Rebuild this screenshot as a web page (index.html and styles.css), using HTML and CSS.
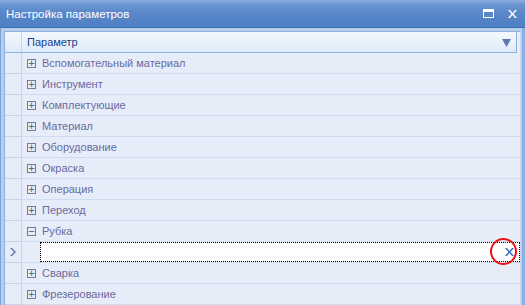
FILE: index.html
```html
<!DOCTYPE html>
<html>
  <head>
    <meta charset="UTF-8" />
    <title>Настройка параметров</title>
    <link rel="stylesheet" href="styles.css">
  </head>
  <body>
    <div class="window">
      <div class="titlebar">
        <div class="title">Настройка параметров</div>
        <div class="buttons">
          <span class="btn-max"></span>
          <svg class="btn-close" width="9" height="8" viewBox="0 0 9 8">
            <path d="M0 0h2l2.5 3 2.5-3h2l-3.5 4 3.5 4h-2l-2.5-3-2.5 3h-2l3.5-4z" fill="#fff"/>
          </svg>
        </div>
      </div>
      <div class="frame">
        <div class="grid">
          <div class="row header">
            <div class="indicator"></div>
            <div class="cell">Параметр
              <svg class="sort" width="9" height="9" viewBox="0 0 9 9"><path d="M0 1h9l-4.5 8z" fill="#5b7bb0"/></svg>
            </div>
          </div>
          <div class="row"><div class="indicator"></div><div class="cell"><span class="toggle">+</span>Вспомогательный материал</div></div>
          <div class="row"><div class="indicator"></div><div class="cell"><span class="toggle">+</span>Инструмент</div></div>
          <div class="row"><div class="indicator"></div><div class="cell"><span class="toggle">+</span>Комплектующие</div></div>
          <div class="row"><div class="indicator"></div><div class="cell"><span class="toggle">+</span>Материал</div></div>
          <div class="row"><div class="indicator"></div><div class="cell"><span class="toggle">+</span>Оборудование</div></div>
          <div class="row"><div class="indicator"></div><div class="cell"><span class="toggle">+</span>Окраска</div></div>
          <div class="row"><div class="indicator"></div><div class="cell"><span class="toggle">+</span>Операция</div></div>
          <div class="row"><div class="indicator"></div><div class="cell"><span class="toggle">+</span>Переход</div></div>
          <div class="row"><div class="indicator"></div><div class="cell"><span class="toggle">−</span>Рубка</div></div>
          <div class="row current">
            <div class="indicator">
              <svg width="6" height="8" viewBox="0 0 6 8"><path d="M0 0h2l4 4-4 4h-2l4-4z" fill="#5b7bb0"/></svg>
            </div>
            <div class="cell">
              <div class="editor">
                <span class="clear-wrap">
                  <svg class="clear" width="9" height="8" viewBox="0 0 9 8">
                    <path d="M0 0h2l2.5 3 2.5-3h2l-3.5 4 3.5 4h-2l-2.5-3-2.5 3h-2l3.5-4z" fill="#3a6cc0"/>
                  </svg>
                  <span class="mark"></span>
                </span>
              </div>
            </div>
          </div>
          <div class="row"><div class="indicator"></div><div class="cell"><span class="toggle">+</span>Сварка</div></div>
          <div class="row"><div class="indicator"></div><div class="cell"><span class="toggle">+</span>Фрезерование</div></div>
        </div>
      </div>
    </div>
  </body>
</html>
```

FILE: styles.css
```css
body,
html {
  margin: 0;
  padding: 0;
  width: 525px;
  height: 305px;
  overflow: hidden;
  font-family: "Liberation Sans", Arial, sans-serif;
  font-size: 11px;
  background-color: #e6edf8;
}

.window {
  height: 305px;
  display: flex;
  flex-direction: column;
}

.titlebar {
  height: 27px;
  flex: none;
  display: flex;
  align-items: center;
  justify-content: space-between;
  padding: 0 8px 0 6px;
  background: linear-gradient(#8aaee0 0, #6e97d2 4px, #5a88c9 12px, #4f7fc4 100%);
  border-bottom: 1px solid #3f6db0;
  color: #fff;
  font-size: 11.5px;
}

.buttons {
  display: flex;
  align-items: center;
  gap: 14px;
}

.btn-max {
  width: 9px;
  height: 5px;
  border: 1px solid #fff;
  border-top-width: 3px;
}

.frame {
  flex: 1;
  padding: 3px 1px 0 3px;
  background: #b6cdee;
  border-left: 1px solid #7fa3d8;
  border-right: 3px solid #8cb0e2;
}

.grid {
  height: 100%;
  background: #e6edf8;
  border-left: 1px solid #8eb0df;
  border-top: 1px solid #8eb0df;
  border-right: 1px solid #c9daf2;
}

.row {
  height: 21px;
  display: flex;
}

.indicator {
  width: 16px;
  flex: none;
  border-right: 1px solid #c2d4ee;
  border-bottom: 1px solid #c2d4ee;
  display: flex;
  align-items: center;
  justify-content: center;
}

.cell {
  flex: 1;
  display: flex;
  align-items: center;
  padding-left: 5px;
  border-bottom: 1px solid #cddcf1;
  color: #6a6aa0;
}

.header .indicator,
.header .cell {
  background: linear-gradient(#f3f8fe, #dfebfa);
  border-bottom: 1px solid #8eb0df;
}

.header .cell {
  color: #15428b;
  justify-content: space-between;
  padding-right: 5px;
  margin-right: 3px;
  border-right: 1px solid #8eb0df;
}

.toggle {
  width: 7px;
  height: 7px;
  border: 1px solid #7a7a8e;
  display: inline-flex;
  align-items: center;
  justify-content: center;
  font-family: "DejaVu Sans", sans-serif;
  font-size: 9px;
  line-height: 7px;
  color: #555;
  margin-right: 6px;
}

.current .cell {
  padding-left: 0;
  padding-right: 0;
}

.editor {
  flex: 1;
  height: 18px;
  margin-left: 18px;
  background: #fff;
  border: 1px dotted #000;
  display: flex;
  align-items: center;
  justify-content: flex-end;
}

.clear-wrap {
  position: relative;
  width: 9px;
  height: 8px;
  margin-right: 5px;
  display: flex;
}

.mark {
  position: absolute;
  left: -15px;
  top: -10px;
  width: 23px;
  height: 23px;
  border: 2.5px solid #ee1111;
  border-radius: 50%;
}
```
